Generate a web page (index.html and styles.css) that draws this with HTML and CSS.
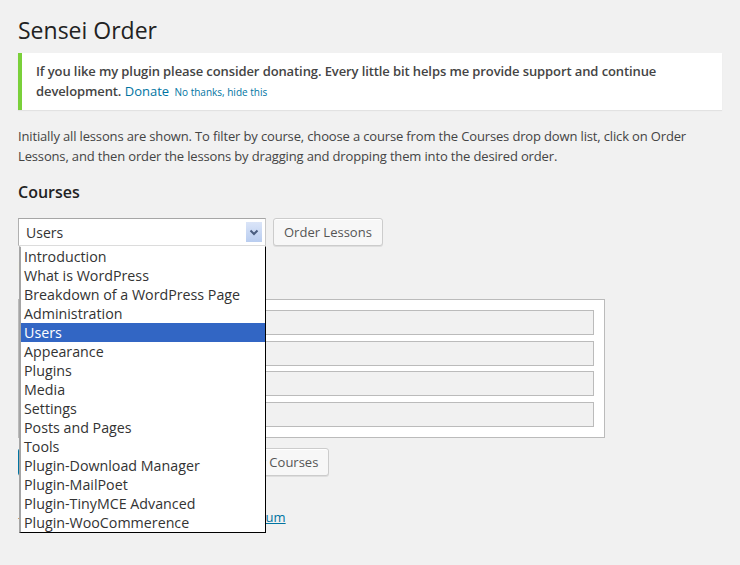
FILE: index.html
```html
<!DOCTYPE html>
<html>
<head>
<meta charset="utf-8">
<link rel="stylesheet" href="styles.css">
</head>
<body>
<div class="wrap">
  <h2 class="page-title">Sensei Order</h2>
  <div class="notice">
    <p><strong>If you like my plugin please consider donating. Every little bit helps me provide support and continue development.</strong> <a class="donate" href="#">Donate</a> <a class="hide-link" href="#">No thanks, hide this</a></p>
  </div>
  <p class="intro">Initially all lessons are shown. To filter by course, choose a course from the Courses drop down list, click on Order Lessons, and then order the lessons by dragging and dropping them into the desired order.</p>
  <h3 class="section-title">Courses</h3>
  <div class="course-row">
    <div class="select-wrap">
      <div class="select">
        <span class="select-value">Users</span>
        <span class="select-arrow"><svg width="16" height="20" viewBox="0 0 16 20"><path d="M4.5 8.5 L8 12 L11.5 8.5" fill="none" stroke="#4a5d80" stroke-width="2"/></svg></span>
      </div>
      <ul class="dropdown">
        <li>Introduction</li>
        <li>What is WordPress</li>
        <li>Breakdown of a WordPress Page</li>
        <li>Administration</li>
        <li class="selected">Users</li>
        <li>Appearance</li>
        <li>Plugins</li>
        <li>Media</li>
        <li>Settings</li>
        <li>Posts and Pages</li>
        <li>Tools</li>
        <li>Plugin-Download Manager</li>
        <li>Plugin-MailPoet</li>
        <li>Plugin-TinyMCE Advanced</li>
        <li>Plugin-WooCommerence</li>
      </ul>
    </div>
    <button class="btn">Order Lessons</button>
  </div>
  <h3 class="section-title lessons-title">Lessons</h3>
  <div class="lessons-box">
    <div class="lesson-row"></div>
    <div class="lesson-row"></div>
    <div class="lesson-row"></div>
    <div class="lesson-row"></div>
  </div>
  <div class="actions">
    <button class="btn btn-primary">Save Lesson Order</button>
    <button class="btn">Order Courses</button>
  </div>
  <p class="help">&ndash; Need help? Visit the Sensei <a href="#">support forum</a></p>
</div>
</body>
</html>
```
FILE: styles.css
```css
html, body {
  margin: 0;
  padding: 0;
  background: #f1f1f1;
}
body {
  min-height: 565px;
  font-family: "Open Sans", "Liberation Sans", sans-serif;
  font-size: 13px;
  line-height: 1.5;
  color: #444;
}
.wrap {
  padding: 0 18px;
}
.page-title {
  margin: 0;
  padding: 16px 0 0;
  font-size: 23px;
  font-weight: 400;
  line-height: 29px;
  color: #222;
}
.notice {
  margin-top: 8px;
  background: #fff;
  border-left: 4px solid #7ad03a;
  box-shadow: 0 1px 1px rgba(0,0,0,.06);
  padding: 1px 12px;
  width: 676px;
}
.notice p {
  margin: 5px 0;
  padding: 2px;
  line-height: 20px;
}
.notice strong {
  font-weight: 600;
  letter-spacing: -0.1px;
}
a {
  color: #0074a2;
  text-decoration: none;
}
.hide-link {
  font-size: 10px;
  margin-left: 2px;
}
.intro {
  margin: 16px 0 0;
  line-height: 20px;
  letter-spacing: -0.15px;
}
.section-title {
  margin: 14px 0 0;
  font-size: 16px;
  font-weight: 600;
  color: #222;
  line-height: 24px;
}
.course-row {
  display: flex;
  gap: 7px;
  margin-top: 14px;
}
.select-wrap {
  position: relative;
}
.select {
  box-sizing: border-box;
  width: 248px;
  height: 28px;
  background: #fff;
  border: 1px solid #aaa;
  border-color: #a6a6a6 #c8c8c8 #dcdcdc #b0b0b0;
  display: flex;
  align-items: center;
  justify-content: space-between;
  padding: 0 3px 0 7px;
}
.select-value {
  font-size: 14px;
  color: #333;
}
.select-arrow {
  width: 16px;
  height: 20px;
  background: linear-gradient(#dbe5f8, #b9cdf0);
  display: block;
}
.select-arrow svg {
  display: block;
}
.dropdown {
  position: absolute;
  left: 1px;
  top: 28px;
  width: 244px;
  margin: 0;
  padding: 0;
  list-style: none;
  background: #fff;
  border: 1px solid #000;
  border-top: 1px solid #fff;
  border-left: 2px solid #a5a5a5;
  z-index: 5;
}
.dropdown li {
  height: 19px;
  line-height: 19px;
  font-size: 14.25px;
  color: #333;
  padding-left: 3px;
  white-space: nowrap;
}
.dropdown li.selected {
  background: #3266c4;
  color: #fff;
}
.btn {
  box-sizing: border-box;
  height: 28px;
  padding: 0 10px;
  font-family: inherit;
  font-size: 13px;
  color: #555;
  background: #f7f7f7;
  border: 1px solid #ccc;
  border-radius: 3px;
  box-shadow: inset 0 1px 0 #fff, 0 1px 0 rgba(0,0,0,.08);
}
.lessons-title {
  margin-top: 10px;
}
.lessons-box {
  box-sizing: border-box;
  width: 587px;
  margin-top: 19px;
  background: #fff;
  border: 1px solid #bbb;
  padding: 10px;
}
.lesson-row {
  box-sizing: border-box;
  height: 25px;
  margin-bottom: 6px;
  background: #f1f1f1;
  border: 1px solid #bbb;
}
.lesson-row:nth-child(2) {
  margin-bottom: 5px;
}
.lesson-row:last-child {
  margin-bottom: 0;
}
.actions {
  display: flex;
  gap: 8px;
  margin-top: 10px;
}
.btn-primary {
  background: #2ea2cc;
  border-color: #0074a2;
  color: #fff;
  width: 193px;
}
.help {
  margin: 31px 0 0;
  line-height: 20px;
  letter-spacing: 0.08px;
}
.help a {
  text-decoration: underline;
}
```
